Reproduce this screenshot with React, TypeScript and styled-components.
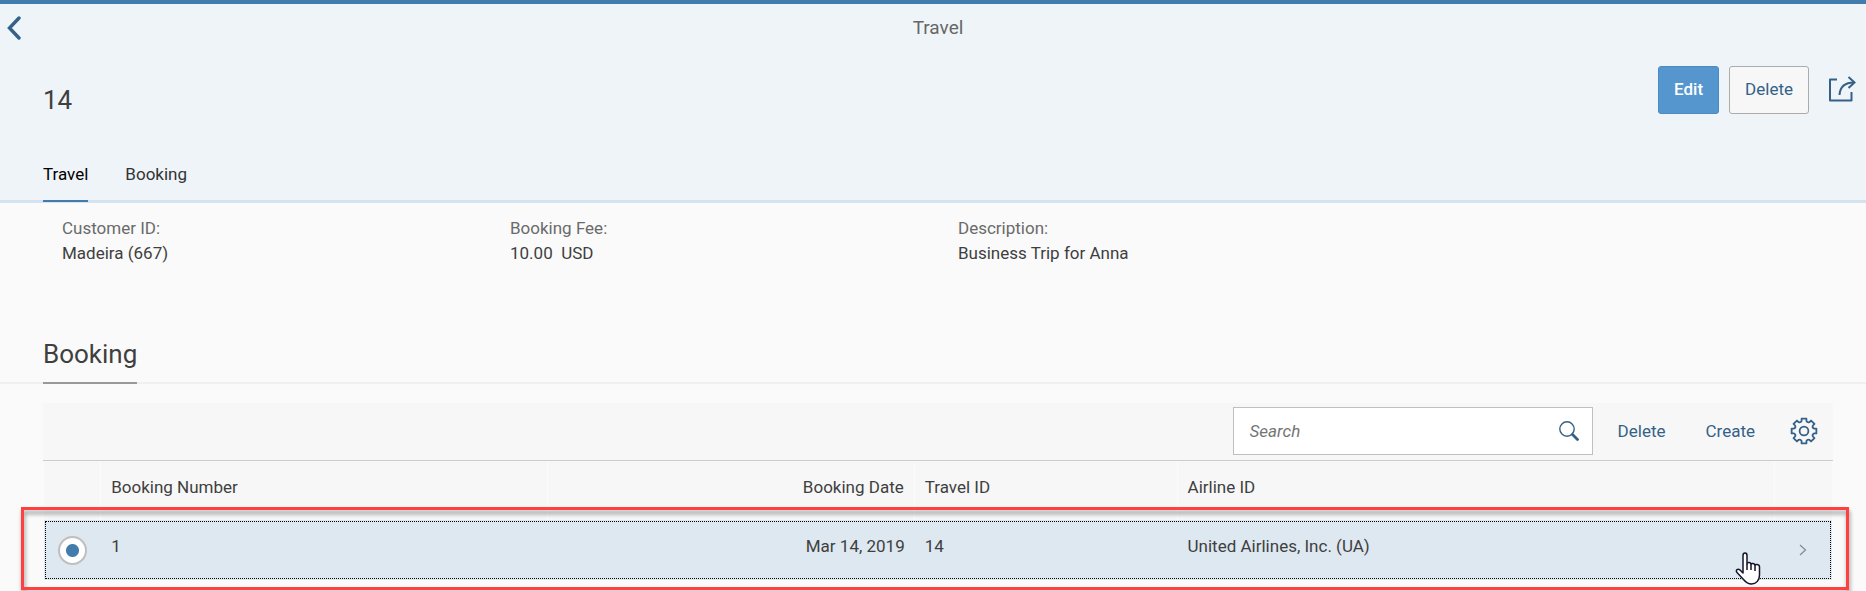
import React from "react";
import styled, { createGlobalStyle } from "styled-components";

const GlobalStyle = createGlobalStyle`
  *, *::before, *::after { box-sizing: border-box; }
  body {
    margin: 0;
    background: #fafafa;
    color: #3f3f3f;
    font-family: Roboto, "Liberation Sans", sans-serif;
    font-size: 17px;
    line-height: 24px;
  }
  button, input { font: inherit; }
`;

const Page = styled.div`
  min-height: 100vh;
  border-top: 4px solid #427cac;
`;

const Header = styled.header`
  background: #eff4f9;
  border-bottom: 3px solid #d5e3f0;
`;

const NavBar = styled.div`
  display: grid;
  grid-template-columns: 48px 1fr 38px;
  align-items: center;
  height: 48px;
`;

const BackButton = styled.button`
  display: flex;
  padding: 0 0 0 7px;
  border: 0;
  background: none;
  color: #346187;
  cursor: pointer;
`;

const NavTitle = styled.div`
  color: #666;
  font-size: 19px;
  text-align: center;
`;

const TitleRow = styled.div`
  display: flex;
  align-items: center;
  justify-content: space-between;
  height: 96px;
  padding: 0 10px 0 43px;
`;

const ObjectTitle = styled.h1`
  margin: 0;
  font-size: 26px;
  font-weight: 400;
`;

const Actions = styled.div`
  display: flex;
  align-items: center;
  gap: 10px;
  padding-bottom: 20px;
`;

const ActionButton = styled.button<{ $primary?: boolean }>`
  height: 48px;
  padding: 0 15px 2px;
  border: 1px solid ${(p) => (p.$primary ? "#4a8bc6" : "#ababab")};
  border-radius: 3px;
  background: ${(p) => (p.$primary ? "#5496cd" : "#f7f7f7")};
  color: ${(p) => (p.$primary ? "#fff" : "#346187")};
  font-weight: ${(p) => (p.$primary ? 500 : 400)};
  cursor: pointer;
`;

const IconButton = styled.button`
  display: flex;
  padding: 0;
  border: 0;
  background: none;
  color: #346187;
  cursor: pointer;
`;

const ShareButton = styled(IconButton)`
  margin-left: 9px;
`;

const Tabs = styled.nav`
  display: flex;
  gap: 37px;
  margin-bottom: -2px;
  padding: 0 43px;
`;

const Tab = styled.a<{ $active?: boolean }>`
  padding: 14px 0;
  border-bottom: 2px solid ${(p) => (p.$active ? "#427cac" : "transparent")};
  color: ${(p) => (p.$active ? "#000" : "#333")};
  text-decoration: none;
`;

const Fields = styled.dl`
  display: grid;
  grid-template-columns: repeat(4, 1fr);
  margin: 0;
  padding: 13px 28px 72px 46px;
  line-height: 25px;
`;

const Field = styled.div`
  padding: 0 16px;
`;

const FieldLabel = styled.dt`
  color: #6a6a6a;
`;

const FieldValue = styled.dd`
  margin: 0;
  white-space: pre;
`;

const SectionHeading = styled.div`
  display: flex;
  padding: 0 43px;
  border-bottom: 2px solid #f0f0f0;
`;

const SectionTitle = styled.h2`
  margin: 0 0 -2px;
  padding-bottom: 12px;
  border-bottom: 2px solid #999;
  font-size: 26px;
  font-weight: 400;
  line-height: 32px;
`;

const TablePanel = styled.section`
  position: relative;
  margin: 19px 33px 0 43px;
`;

const Toolbar = styled.div`
  display: flex;
  align-items: center;
  justify-content: flex-end;
  height: 58px;
  padding: 0 15px 2px 0;
  border-bottom: 1px solid #ccc;
  background: #f7f7f7;
`;

const SearchBox = styled.div`
  display: flex;
  align-items: center;
  width: 360px;
  height: 48px;
  padding: 0 13px 0 16px;
  border: 1px solid #bfbfbf;
  background: #fff;
`;

const SearchInput = styled.input`
  flex: 1;
  min-width: 0;
  padding: 0;
  border: 0;
  outline: 0;
  background: none;
  &::placeholder {
    color: #757575;
    font-style: italic;
    opacity: 1;
  }
`;

const TextButton = styled.button`
  margin-left: 25px;
  padding: 0;
  border: 0;
  background: none;
  color: #346187;
  cursor: pointer;
  & + & { margin-left: 40px; }
`;

const SettingsButton = styled(IconButton)`
  margin-left: 35px;
`;

const Table = styled.table`
  width: calc(100% - 2px);
  margin-left: 1px;
  table-layout: fixed;
  border-collapse: separate;
  border-spacing: 0;
`;

const Column = styled.col<{ $share: number }>`
  width: ${(p) => p.$share}%;
`;

const HeadCell = styled.th<{ $end?: boolean }>`
  height: 59px;
  padding: 0 10px 7px;
  border-right: 1px solid #fbfbfb;
  background: #f7f7f7;
  font-weight: 400;
  text-align: ${(p) => (p.$end ? "right" : "left")};
  &:last-child { border-right: 0; }
`;

const BodyRow = styled.tr`
  outline: 1px dotted #000;
  outline-offset: -2px;
  background: #dde8f1;
  cursor: pointer;
`;

const Cell = styled.td<{ $end?: boolean }>`
  height: 60px;
  padding: 0 10px 8px;
  text-align: ${(p) => (p.$end ? "right" : "left")};
`;

const RadioCell = styled.td`
  padding: 0 0 0 14px;
`;

const ArrowCell = styled.td`
  padding: 0 25px 0 0;
  color: #888;
  & > svg { display: block; margin-left: auto; }
`;

const Radio = styled.input`
  display: block;
  appearance: none;
  width: 29px;
  height: 29px;
  margin: 0;
  border: 2px solid #bfbfbf;
  border-radius: 50%;
  background: radial-gradient(circle, #427cac 6px, #fff 7px);
`;

const Highlight = styled.div`
  position: absolute;
  right: -16px;
  bottom: -10px;
  left: -22px;
  height: 83px;
  border: 3px solid #ff4040;
  filter: drop-shadow(1px 4px 2px rgba(0, 0, 0, 0.4));
  pointer-events: none;
`;

const Pointer = styled.svg`
  position: absolute;
  right: 72px;
  bottom: -5px;
  pointer-events: none;
`;

const BackIcon = () => (
  <svg width="14" height="24" viewBox="0 0 14 24" fill="none" stroke="currentColor" strokeWidth="3.400">
    <path d="M12 2 2.500 12 12 22" strokeLinecap="round" />
  </svg>
);

const ShareIcon = () => (
  <svg width="28" height="28" viewBox="0 0 28 28" fill="none" stroke="currentColor" strokeWidth="2">
    <path d="M9 3.500H2V24.500h21.500v-8.500" strokeLinejoin="round" />
    <path d="M11.500 19C12 11 16.500 6.500 26 6.500" />
    <path d="M20.500 1 26.500 6.500l-6 5.500" />
  </svg>
);

const SearchIcon = () => (
  <svg width="20" height="20" viewBox="0 0 20 20" fill="none" stroke="#346187">
    <circle cx="8" cy="8" r="7.200" strokeWidth="1.400" />
    <path d="m13.500 13.500 5 5" strokeWidth="2.800" strokeLinecap="round" />
  </svg>
);

const gearTeeth = Array.from({ length: 8 }, (_, i) => {
  const at = (r: number, deg: number) => {
    const a = ((i * 45 + deg - 90) * Math.PI) / 180;
    return `${(14 + r * Math.cos(a)).toFixed(2)} ${(14 + r * Math.sin(a)).toFixed(2)}`;
  };
  return `${i ? "L" : "M"}${at(12.6, -11)}L${at(12.6, 11)}L${at(10.2, 14)}Q${at(8.8, 22.5)} ${at(10.2, 31)}`;
});

const GearIcon = () => (
  <svg width="28" height="28" viewBox="0 0 28 28" fill="none" stroke="currentColor" strokeWidth="1.800" strokeLinejoin="round">
    <path d={`${gearTeeth.join("")}Z`} />
    <circle cx="14" cy="14" r="4.400" />
  </svg>
);

const ArrowIcon = () => (
  <svg width="8" height="12" viewBox="0 0 8 12" fill="none" stroke="currentColor" strokeWidth="1.200">
    <path d="m1 1 5.500 5L1 11" />
  </svg>
);

const fields = [
  { label: "Customer ID:", value: "Madeira (667)" },
  { label: "Booking Fee:", value: "10.00  USD" },
  { label: "Description:", value: "Business Trip for Anna" },
];

const columnShares = [3.2, 25, 20.5, 14.7, 33.4, 3.2];

export default function App() {
  return (
    <Page>
      <GlobalStyle />
      <Header>
        <NavBar>
          <BackButton aria-label="Back"><BackIcon /></BackButton>
          <NavTitle>Travel</NavTitle>
        </NavBar>
        <TitleRow>
          <ObjectTitle>14</ObjectTitle>
          <Actions>
            <ActionButton $primary>Edit</ActionButton>
            <ActionButton>Delete</ActionButton>
            <ShareButton aria-label="Share"><ShareIcon /></ShareButton>
          </Actions>
        </TitleRow>
        <Tabs>
          <Tab href="#travel" $active>Travel</Tab>
          <Tab href="#booking">Booking</Tab>
        </Tabs>
      </Header>
      <main>
        <Fields id="travel">
          {fields.map((f) => (
            <Field key={f.label}>
              <FieldLabel>{f.label}</FieldLabel>
              <FieldValue>{f.value}</FieldValue>
            </Field>
          ))}
        </Fields>
        <SectionHeading id="booking">
          <SectionTitle>Booking</SectionTitle>
        </SectionHeading>
        <TablePanel>
          <Toolbar>
            <SearchBox>
              <SearchInput type="search" placeholder="Search" aria-label="Search" />
              <IconButton aria-label="Start search"><SearchIcon /></IconButton>
            </SearchBox>
            <TextButton>Delete</TextButton>
            <TextButton>Create</TextButton>
            <SettingsButton aria-label="Settings"><GearIcon /></SettingsButton>
          </Toolbar>
          <Table>
            <colgroup>
              {columnShares.map((share, i) => <Column key={i} $share={share} />)}
            </colgroup>
            <thead>
              <tr>
                <HeadCell />
                <HeadCell>Booking Number</HeadCell>
                <HeadCell $end>Booking Date</HeadCell>
                <HeadCell>Travel ID</HeadCell>
                <HeadCell>Airline ID</HeadCell>
                <HeadCell />
              </tr>
            </thead>
            <tbody>
              <BodyRow>
                <RadioCell><Radio type="radio" name="booking" aria-label="Select booking 1" defaultChecked /></RadioCell>
                <Cell>1</Cell>
                <Cell $end>Mar 14, 2019</Cell>
                <Cell>14</Cell>
                <Cell>United Airlines, Inc. (UA)</Cell>
                <ArrowCell><ArrowIcon /></ArrowCell>
              </BodyRow>
            </tbody>
          </Table>
          <Highlight />
          <Pointer width="26" height="33" viewBox="0 0 26 33" fill="#fff" stroke="#14142b" strokeWidth="1.500" strokeLinejoin="round">
            <path d="M8 21V3.500C8 .3 12 .3 12 3.500V12c0-2 4-2 4 .6 0-1.600 4-1.600 4 .9 0-1.500 4.500-1.500 4.500 1.500v8c0 5-3 9-8 9-4 0-6-2-8-4.500L2 20.500c-2-2.500 1-4.300 3-2.500Z" />
            <path d="M12 12v6M16 12.600V18M20 13.500V19" fill="none" />
          </Pointer>
        </TablePanel>
      </main>
    </Page>
  );
}
